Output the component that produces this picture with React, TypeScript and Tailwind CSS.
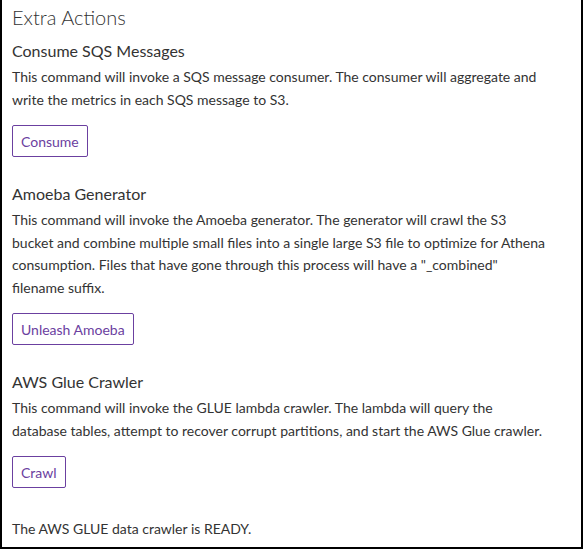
import React from 'react';

const sections = [
  {
    title: 'Consume SQS Messages',
    text: 'This command will invoke a SQS message consumer. The consumer will aggregate and write the metrics in each SQS message to S3.',
    button: 'Consume',
  },
  {
    title: 'Amoeba Generator',
    text: 'This command will invoke the Amoeba generator. The generator will crawl the S3 bucket and combine multiple small files into a single large S3 file to optimize for Athena consumption. Files that have gone through this process will have a "_combined" filename suffix.',
    button: 'Unleash Amoeba',
  },
  {
    title: 'AWS Glue Crawler',
    text: 'This command will invoke the GLUE lambda crawler. The lambda will query the database tables, attempt to recover corrupt partitions, and start the AWS Glue crawler.',
    button: 'Crawl',
  },
];

const App: React.FC = () => {
  return (
    <div
      className="w-[583px] h-[549px] bg-white border-2 border-t-0 border-black pl-[10px] pr-[32px] text-[#333333] overflow-hidden"
      style={{ fontFamily: 'Lato, sans-serif' }}
    >
      <h1 className="text-[20px] font-light leading-[28px] pt-[3px]">Extra Actions</h1>
      <div className="mt-[9px] flex flex-col gap-[26px]">
        {sections.map((s) => (
          <section key={s.title}>
            <h2 className="text-[16px] leading-[22px]">{s.title}</h2>
            <p className="mt-[4px] text-[14px] leading-[22.5px]">{s.text}</p>
            <button className="mt-[14px] h-[32px] px-[8px] border border-[#6b40a0] rounded-[2px] text-[14px] text-[#6b40a0] bg-white">
              {s.button}
            </button>
          </section>
        ))}
      </div>
      <p className="mt-[30px] text-[14px] leading-[22px]">The AWS GLUE data crawler is READY.</p>
    </div>
  );
};

export default App;
